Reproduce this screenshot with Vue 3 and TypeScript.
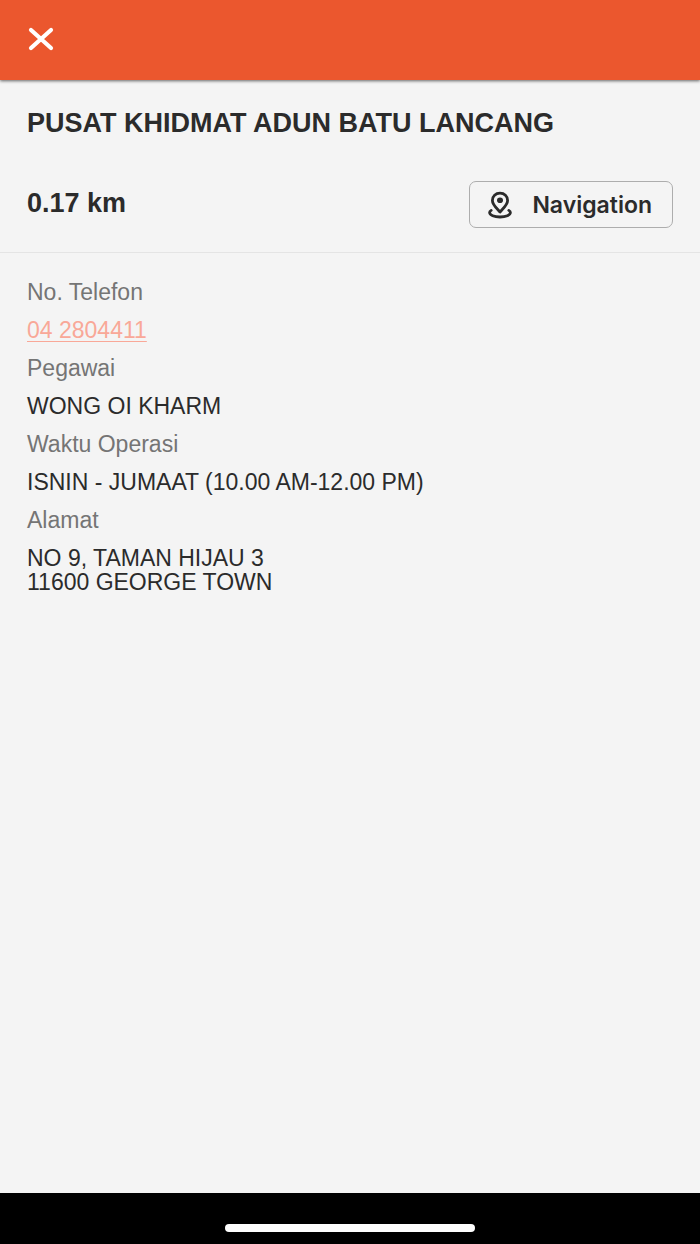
<script setup lang="ts">
interface Field {
  label: string
  lines: string[]
  href?: string
}

const title = 'PUSAT KHIDMAT ADUN BATU LANCANG'
const distance = '0.17 km'

const fields: Field[] = [
  { label: 'No. Telefon', lines: ['04 2804411'], href: 'tel:042804411' },
  { label: 'Pegawai', lines: ['WONG OI KHARM'] },
  { label: 'Waktu Operasi', lines: ['ISNIN - JUMAAT (10.00 AM-12.00 PM)'] },
  { label: 'Alamat', lines: ['NO 9, TAMAN HIJAU 3', '11600 GEORGE TOWN'] },
]
</script>

<template>
  <div class="screen">
    <header class="app-bar">
      <button class="close" type="button" aria-label="Tutup">
        <svg width="26" height="24" viewBox="0 0 26 24" aria-hidden="true">
          <path d="M3 3L23 21M23 3L3 21" fill="none" stroke="#fff" stroke-width="4.2" stroke-linecap="round" />
        </svg>
      </button>
    </header>

    <main class="content">
      <section class="summary">
        <h1 class="title">{{ title }}</h1>
        <div class="row">
          <p class="distance">{{ distance }}</p>
          <button class="navigate" type="button">
            <svg width="24" height="28" viewBox="0 0 24 28" aria-hidden="true">
              <g fill="none" stroke="#2b2b2b" stroke-width="2.8" stroke-linecap="round" stroke-linejoin="round">
                <path d="M12 21C8.6 17 4.4 13.6 4.4 9.4C4.4 5.2 7.6 2.2 12 2.2C16.4 2.2 19.6 5.2 19.6 9.4C19.6 13.6 15.4 17 12 21Z" />
                <path d="M3.2 19.4C2 20.1 1.6 20.8 1.6 21.6C1.6 24.2 6.2 26 12 26C17.8 26 22.4 24.2 22.4 21.6C22.4 20.8 22 20.1 20.8 19.4" />
              </g>
              <ellipse cx="12" cy="9.2" rx="3" ry="2.8" fill="#2b2b2b" />
            </svg>
            <span>Navigation</span>
          </button>
        </div>
      </section>

      <dl class="details">
        <template v-for="field in fields" :key="field.label">
          <dt>{{ field.label }}</dt>
          <dd>
            <a v-if="field.href" :href="field.href">{{ field.lines[0] }}</a>
            <template v-else>
              <span v-for="line in field.lines" :key="line" class="line">{{ line }}</span>
            </template>
          </dd>
        </template>
      </dl>
    </main>

    <footer class="home-area">
      <span class="home-indicator"></span>
    </footer>
  </div>
</template>

<style>
body {
  margin: 0;
  background: #f4f4f4;
}
</style>

<style scoped>
.screen {
  display: flex;
  flex-direction: column;
  min-height: 100vh;
  background: #f4f4f4;
  color: #2b2b2b;
  font-family: "Liberation Sans", Arial, Helvetica, sans-serif;
}

.app-bar {
  display: flex;
  align-items: center;
  box-sizing: border-box;
  height: 80px;
  padding: 0 28px 3px;
  background: #eb572e;
  box-shadow: 0 1px 3px rgba(0, 0, 0, 0.6);
}

.close {
  display: flex;
  padding: 0;
  border: 0;
  background: none;
  cursor: pointer;
}

.content {
  flex: 1;
}

.summary {
  padding: 28px 27px 24px;
  border-bottom: 1px solid #e4e4e4;
}

.title {
  margin: 0 0 43px;
  font-size: 27px;
  line-height: 30px;
  font-weight: 700;
}

.row {
  display: flex;
  align-items: center;
  justify-content: space-between;
}

.distance {
  margin: 0;
  padding-bottom: 4px;
  font-size: 27px;
  line-height: 30px;
  font-weight: 700;
}

.navigate {
  display: flex;
  align-items: center;
  gap: 20px;
  box-sizing: border-box;
  height: 47px;
  padding: 0 20px 0 18px;
  border: 1px solid #adadad;
  border-radius: 7px;
  background: none;
  color: #2b2b2b;
  font-family: Inter, Roboto, sans-serif;
  font-size: 23px;
  font-weight: 600;
  cursor: pointer;
}

.details {
  margin: 0;
  padding: 27px;
  font-size: 23px;
  line-height: 24px;
}

dt {
  margin-bottom: 14px;
  color: #757575;
}

dd {
  margin: 0 0 14px;
}

dd a {
  color: #f9a898;
  text-decoration-thickness: 1px;
  text-underline-offset: 3px;
}

.line {
  display: block;
}

.home-area {
  display: flex;
  align-items: flex-end;
  justify-content: center;
  box-sizing: border-box;
  height: 51px;
  padding-bottom: 12px;
  background: #000;
}

.home-indicator {
  width: 250px;
  height: 8px;
  border-radius: 4px;
  background: #fff;
}
</style>
